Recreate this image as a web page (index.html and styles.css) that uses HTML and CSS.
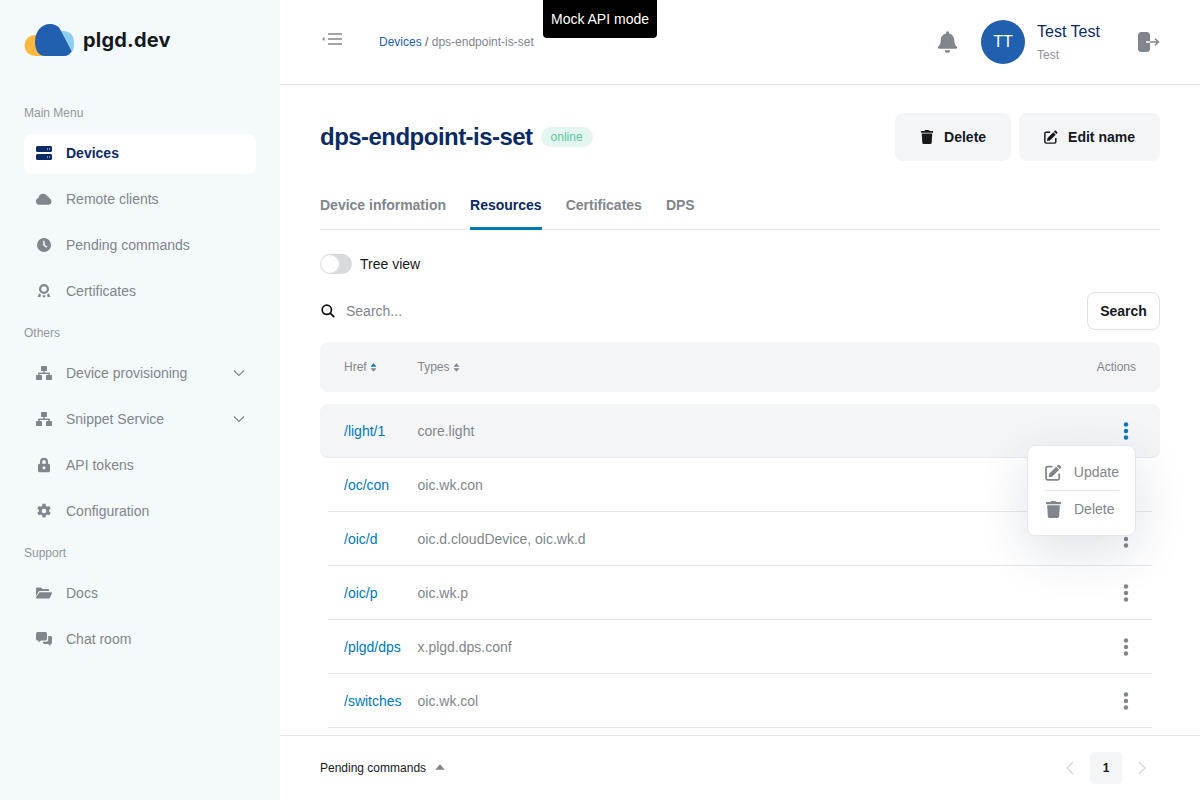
FILE: index.html
```html
<!DOCTYPE html>
<html lang="en">
<head>
  <meta charset="UTF-8">
  <meta name="viewport" content="width=device-width, initial-scale=1.0">
  <title>plgd.dev - dps-endpoint-is-set</title>
  <link rel="stylesheet" href="styles.css">
</head>
<body>
  <svg class="sprites" width="0" height="0">
    <symbol id="i-server" viewBox="0 0 16 16">
      <path fill-rule="evenodd" d="M1.500 1h13A1.500 1.500 0 0 1 16 2.500v3A1.500 1.500 0 0 1 14.500 7h-13A1.500 1.500 0 0 1 0 5.500v-3A1.500 1.500 0 0 1 1.500 1zM11 3.500v1h1v-1zm2 0v1h1v-1zM1.500 9h13A1.500 1.500 0 0 1 16 10.500v3a1.500 1.500 0 0 1-1.500 1.500h-13A1.500 1.500 0 0 1 0 13.500v-3A1.500 1.500 0 0 1 1.500 9zM11 11.500v1h1v-1zm2 0v1h1v-1z"/>
    </symbol>
    <symbol id="i-cloud" viewBox="0 0 16 16">
      <path d="M3.400 13.800A3.400 3.400 0 0 1 2.500 7.100 4.800 4.800 0 0 1 11.500 5.200a3 3 0 0 1 1.700 2 3.400 3.400 0 0 1-.6 6.600z"/>
    </symbol>
    <symbol id="i-clock" viewBox="0 0 16 16">
      <path fill-rule="evenodd" d="M8 1a7 7 0 1 1 0 14A7 7 0 0 1 8 1zM7.200 3.800v4.700l3.300 2.300.9-1.200-2.700-1.900V3.800z"/>
    </symbol>
    <symbol id="i-award" viewBox="0 0 16 16">
      <path fill-rule="evenodd" d="M8 1a5 5 0 1 1 0 10A5 5 0 0 1 8 1zm0 2.200a2.800 2.800 0 1 0 0 5.600 2.800 2.800 0 0 0 0-5.600zM3.300 10.300l1.700 1.500-.8 2.700-1.300-.8-1.400.3zm9.400 0l1.800 3.700-1.400-.3-1.300.8-.8-2.700zM6.800 12.300h2.400l.3 1.200-1.500 1.200-1.500-1.200z"/>
    </symbol>
    <symbol id="i-network" viewBox="0 0 16 16">
      <rect x="5" y="1" width="6" height="5" rx=".7"/>
      <rect x="7.300" y="5" width="1.400" height="3.500"/>
      <rect x="2.300" y="7.600" width="11.400" height="1.400"/>
      <rect x="2.300" y="8" width="1.400" height="3"/>
      <rect x="12.300" y="8" width="1.400" height="3"/>
      <rect x="0" y="10" width="6" height="5" rx=".7"/>
      <rect x="10" y="10" width="6" height="5" rx=".7"/>
    </symbol>
    <symbol id="i-lock" viewBox="0 0 16 16">
      <path fill-rule="evenodd" d="M8 .8a4 4 0 0 1 4 4v2h.5A1.500 1.500 0 0 1 14 8.300v5.400a1.500 1.500 0 0 1-1.500 1.500h-9A1.500 1.500 0 0 1 2 13.700V8.300a1.500 1.500 0 0 1 1.500-1.500H4v-2a4 4 0 0 1 4-4zm0 2.300a1.800 1.800 0 0 0-1.800 1.800v1.900h3.600V4.900A1.800 1.800 0 0 0 8 3.100zm0 6.200a1.500 1.500 0 1 0 0 3 1.500 1.500 0 0 0 0-3z"/>
    </symbol>
    <symbol id="i-cog" viewBox="0 0 16 16">
      <path fill-rule="evenodd" d="M6.500.8h3l.4 2.200 1.200.7 2.100-.8 1.500 2.600-1.700 1.400v1.400l1.700 1.400-1.500 2.600-2.100-.8-1.200.7-.4 2.200h-3l-.4-2.200-1.200-.7-2.100.8-1.500-2.600 1.700-1.400V6.900L1.300 5.500l1.500-2.600 2.100.8L6.100 3zM8 5.700a2.300 2.300 0 1 0 0 4.600 2.300 2.300 0 0 0 0-4.600z"/>
    </symbol>
    <symbol id="i-folder" viewBox="0 0 16 16">
      <path d="M0 3.500A1 1 0 0 1 1 2.500h4l1.500 1.500H12a1 1 0 0 1 1 1v1H4.200a2 2 0 0 0-1.800 1L0 11.200zM4.200 7.200H15a1 1 0 0 1 .9 1.400l-1.900 4a1.500 1.500 0 0 1-1.300.9H1a1 1 0 0 1-.8-1.500l2.800-4.100a1.500 1.500 0 0 1 1.200-.7z"/>
    </symbol>
    <symbol id="i-chat" viewBox="0 0 16 16">
      <path d="M1.500 1h8A1.500 1.500 0 0 1 11 2.500V8a1.500 1.500 0 0 1-1.500 1.500H5L2.500 11.500V9.500h-1A1.500 1.500 0 0 1 0 8V2.500A1.500 1.500 0 0 1 1.500 1zM12.200 5h2.300A1.500 1.500 0 0 1 16 6.500v5a1.500 1.500 0 0 1-1.500 1.500v2L12 13H8.500A1.500 1.500 0 0 1 7 11.500v-.8h3.200a2 2 0 0 0 2-2z"/>
    </symbol>
    <symbol id="i-trash" viewBox="0 0 448 512">
      <path d="M432 32H312l-9.400-18.700A24 24 0 0 0 281.100 0H166.800a23.720 23.720 0 0 0-21.400 13.300L136 32H16A16 16 0 0 0 0 48v32a16 16 0 0 0 16 16h416a16 16 0 0 0 16-16V48a16 16 0 0 0-16-16zM53.200 467a48 48 0 0 0 47.900 45h245.800a48 48 0 0 0 47.900-45L416 128H32z"/>
    </symbol>
    <symbol id="i-edit" viewBox="0 0 16 16">
      <path d="M12.300.9a1 1 0 0 1 1.400 0l1.400 1.400a1 1 0 0 1 0 1.400l-1 1-2.800-2.800zM10.600 2.600l2.800 2.800-6.600 6.600-3.300.5.500-3.300z"/>
      <path d="M7 2.500H2.500A1.500 1.500 0 0 0 1 4v9.500A1.500 1.500 0 0 0 2.500 15H12a1.500 1.500 0 0 0 1.500-1.500V9" fill="none" stroke="currentColor" stroke-width="1.700"/>
    </symbol>
    <symbol id="i-bell" viewBox="0 0 448 512">
      <path d="M224 512c35.320 0 63.970-28.650 63.970-64H160.030c0 35.350 28.650 64 63.970 64zm215.390-149.710c-19.320-20.760-55.470-51.990-55.470-154.290 0-77.700-54.480-139.900-127.940-155.160V32c0-17.670-14.320-32-31.980-32s-31.980 14.330-31.980 32v20.840C118.560 68.100 64.080 130.300 64.080 208c0 102.300-36.150 133.530-55.470 154.290-6 6.450-8.660 14.160-8.610 21.710.11 16.400 12.980 32 32.100 32h383.800c19.120 0 32-15.600 32.100-32 .05-7.550-2.610-15.270-8.610-21.710z"/>
    </symbol>
    <symbol id="i-dots" viewBox="0 0 6 20">
      <circle cx="3" cy="3.500" r="2.200"/>
      <circle cx="3" cy="10" r="2.200"/>
      <circle cx="3" cy="16.500" r="2.200"/>
    </symbol>
    <symbol id="i-sort-up" viewBox="0 0 8 5">
      <path d="M4 .3 7.700 4.700H.3z"/>
    </symbol>
  </svg>

  <div class="app">
    <aside class="sidebar">
      <div class="brand">
        <svg class="brand-logo" width="50" height="32" viewBox="0 0 50 32">
          <path d="M11 32A10.500 10.500 0 0 1 11 11h8V32z" fill="#ffb83f"/>
          <path d="M36 7h4A10 10 0 0 1 50 17v5a10 10 0 0 1-3 7z" fill="#8fcdf2"/>
          <path d="M21 32C14 32 11 25 11 18 11 8 17 0 26 0c5 0 9 2 11 7l10.500 20c-1 3-4 5-7.500 5z" fill="#2060ae"/>
        </svg>
        <span class="brand-name">plgd.dev</span>
      </div>

      <p class="menu-label menu-label-first">Main Menu</p>
      <a class="menu-item active"><svg class="menu-icon"><use href="#i-server"/></svg>Devices</a>
      <a class="menu-item"><svg class="menu-icon"><use href="#i-cloud"/></svg>Remote clients</a>
      <a class="menu-item"><svg class="menu-icon"><use href="#i-clock"/></svg>Pending commands</a>
      <a class="menu-item"><svg class="menu-icon"><use href="#i-award"/></svg>Certificates</a>

      <p class="menu-label">Others</p>
      <a class="menu-item"><svg class="menu-icon"><use href="#i-network"/></svg>Device provisioning
        <svg class="menu-arrow" viewBox="0 0 12 12"><path d="M1 3.500l5 5 5-5"/></svg></a>
      <a class="menu-item"><svg class="menu-icon"><use href="#i-network"/></svg>Snippet Service
        <svg class="menu-arrow" viewBox="0 0 12 12"><path d="M1 3.500l5 5 5-5"/></svg></a>
      <a class="menu-item"><svg class="menu-icon"><use href="#i-lock"/></svg>API tokens</a>
      <a class="menu-item"><svg class="menu-icon"><use href="#i-cog"/></svg>Configuration</a>

      <p class="menu-label">Support</p>
      <a class="menu-item"><svg class="menu-icon"><use href="#i-folder"/></svg>Docs</a>
      <a class="menu-item"><svg class="menu-icon"><use href="#i-chat"/></svg>Chat room</a>
    </aside>

    <div class="main">
      <div class="mock-badge">Mock API mode</div>

      <header class="topbar">
        <svg class="collapse-icon" width="20" height="12" viewBox="0 0 20 12">
          <path d="M0 6l2.500-2v4z" fill="#81868c"/>
          <path d="M6 1h14M6 6h14M6 11h14" stroke="#81868c" stroke-width="1.500" fill="none"/>
        </svg>
        <div class="breadcrumbs"><a>Devices</a> <span class="crumb-sep">/</span> dps-endpoint-is-set</div>
        <div class="topbar-right">
          <svg class="bell"><use href="#i-bell"/></svg>
          <div class="avatar">TT</div>
          <div class="user">
            <div class="user-name">Test Test</div>
            <div class="user-role">Test</div>
          </div>
          <svg class="logout" width="22" height="20" viewBox="0 0 22 20">
            <rect x="0" y="0" width="12" height="20" rx="3.500" fill="#81868c"/>
            <path d="M8 10h12M17 6.800 20.500 10 17 13.200" fill="none" stroke="#81868c" stroke-width="1.500"/>
            <path d="M8 10h4" stroke="#fff" stroke-width="1.500"/>
          </svg>
        </div>
      </header>

      <main class="content">
        <div class="page-head">
          <h1>dps-endpoint-is-set</h1>
          <span class="status">online</span>
          <div class="page-actions">
            <button class="btn"><svg class="btn-icon"><use href="#i-trash"/></svg>Delete</button>
            <button class="btn"><svg class="btn-icon"><use href="#i-edit"/></svg>Edit name</button>
          </div>
        </div>

        <nav class="tabs">
          <a class="tab">Device information</a>
          <a class="tab active">Resources</a>
          <a class="tab">Certificates</a>
          <a class="tab">DPS</a>
        </nav>

        <div class="tree-toggle">
          <span class="switch"></span>
          <span>Tree view</span>
        </div>

        <div class="search-row">
          <svg class="search-icon" width="14" height="14" viewBox="0 0 14 14">
            <circle cx="5.800" cy="5.800" r="4.600" fill="none" stroke="#111" stroke-width="1.700"/>
            <path d="M9.200 9.200l4 4" stroke="#111" stroke-width="1.900"/>
          </svg>
          <span class="search-input">Search...</span>
          <button class="search-btn">Search</button>
        </div>

        <div class="table">
          <div class="table-head">
            <span class="head-cell">Href <span class="sort"><svg class="sort-up active"><use href="#i-sort-up"/></svg><svg class="sort-down"><use href="#i-sort-up"/></svg></span></span>
            <span class="head-cell">Types <span class="sort"><svg class="sort-up"><use href="#i-sort-up"/></svg><svg class="sort-down"><use href="#i-sort-up"/></svg></span></span>
            <span>Actions</span>
          </div>

          <div class="table-row hover">
            <a class="href">/light/1</a><span>core.light</span>
            <svg class="dots"><use href="#i-dots"/></svg>
          </div>
          <div class="table-row">
            <a class="href">/oc/con</a><span>oic.wk.con</span>
            <svg class="dots"><use href="#i-dots"/></svg>
          </div>
          <div class="table-row">
            <a class="href">/oic/d</a><span>oic.d.cloudDevice, oic.wk.d</span>
            <svg class="dots"><use href="#i-dots"/></svg>
          </div>
          <div class="table-row">
            <a class="href">/oic/p</a><span>oic.wk.p</span>
            <svg class="dots"><use href="#i-dots"/></svg>
          </div>
          <div class="table-row">
            <a class="href">/plgd/dps</a><span>x.plgd.dps.conf</span>
            <svg class="dots"><use href="#i-dots"/></svg>
          </div>
          <div class="table-row">
            <a class="href">/switches</a><span>oic.wk.col</span>
            <svg class="dots"><use href="#i-dots"/></svg>
          </div>

          <div class="row-menu">
            <div class="row-menu-item"><svg class="row-menu-icon"><use href="#i-edit"/></svg>Update</div>
            <div class="row-menu-item"><svg class="row-menu-icon"><use href="#i-trash"/></svg>Delete</div>
          </div>
        </div>
      </main>

      <footer class="footer">
        <span class="pending">Pending commands</span>
        <svg class="pending-caret" width="10" height="6" viewBox="0 0 10 6"><path d="M5 .3 9.800 5.700H.2z" fill="#81868c"/></svg>
        <div class="pager">
          <svg class="pager-arrow" viewBox="0 0 10 14"><path d="M8 1 2 7l6 6"/></svg>
          <span class="page-num">1</span>
          <svg class="pager-arrow" viewBox="0 0 10 14"><path d="M2 1l6 6-6 6"/></svg>
        </div>
      </footer>
    </div>
  </div>
</body>
</html>
```

FILE: styles.css
```css
:root {
  --navy: #0b2a66;
  --blue: #0078be;
  --grey: #81868c;
  --light-bg: #f4f5f7;
  --line: #e6e8ee;
}

* {
  margin: 0;
  padding: 0;
  box-sizing: border-box;
}

html, body {
  height: 100%;
}

body {
  font-family: "Liberation Sans", Arial, sans-serif;
  font-size: 14px;
  color: var(--grey);
  background: #fff;
  overflow: hidden;
}

.sprites {
  display: none;
}

svg {
  fill: currentColor;
}

.app {
  display: flex;
  height: 800px;
}

/* sidebar */

.sidebar {
  width: 280px;
  flex: none;
  background: #f4f9fc;
  padding: 24px 24px 0;
}

.brand {
  display: flex;
  align-items: center;
  gap: 9px;
  height: 32px;
}

.brand-name {
  font-family: Inter, "Liberation Sans", sans-serif;
  font-size: 20px;
  font-weight: 700;
  color: #16191c;
  letter-spacing: 0.2px;
}

.menu-label {
  font-size: 12px;
  line-height: 14px;
  color: #93979c;
  margin: 14px 0;
  height: 14px;
}

.menu-label-first {
  margin-top: 50px;
}

.menu-item {
  display: flex;
  align-items: center;
  height: 40px;
  margin-bottom: 6px;
  padding: 0 12px 2px;
  border-radius: 8px;
  color: var(--grey);
}

.menu-item.active {
  background: #fff;
  color: var(--navy);
  font-weight: 700;
}

.menu-icon {
  width: 16px;
  height: 16px;
  margin-right: 14px;
  flex: none;
}

.menu-arrow {
  width: 12px;
  height: 12px;
  margin-left: auto;
  margin-right: -1px;
  fill: none;
  stroke: var(--grey);
  stroke-width: 1.200;
}

/* top bar */

.main {
  flex: 1;
  min-width: 0;
  display: flex;
  flex-direction: column;
  position: relative;
}

.mock-badge {
  position: absolute;
  top: 0;
  left: 263px;
  width: 114px;
  height: 38px;
  background: #000;
  color: #fff;
  border-radius: 0 0 4px 4px;
  display: flex;
  align-items: center;
  justify-content: center;
  z-index: 5;
}

.topbar {
  height: 85px;
  flex: none;
  display: flex;
  align-items: center;
  padding: 0 40px;
  border-bottom: 1px solid var(--line);
}

.collapse-icon {
  margin: 0 37px 6px 2px;
  flex: none;
}

.breadcrumbs {
  font-size: 12px;
  color: var(--grey);
}

.breadcrumbs a {
  color: #2060ae;
}

.crumb-sep {
  color: #555;
}

.topbar-right {
  margin-left: auto;
  display: flex;
  align-items: center;
}

.bell {
  width: 19px;
  height: 22px;
  margin-right: 24px;
  color: var(--grey);
}

.avatar {
  width: 44px;
  height: 44px;
  border-radius: 50%;
  background: #2060ae;
  color: #fff;
  font-size: 16px;
  display: flex;
  align-items: center;
  justify-content: center;
  margin-right: 12px;
}

.user {
  width: 101px;
  padding-top: 1px;
}

.user-name {
  font-size: 16px;
  line-height: 18px;
  color: var(--navy);
  margin-bottom: 7px;
}

.user-role {
  font-size: 12px;
  line-height: 14px;
  color: #93979c;
}

.logout {
  flex: none;
}

/* page content */

.content {
  flex: 1;
  min-height: 0;
  overflow: hidden;
  padding: 28px 40px 0;
}

.page-head {
  display: flex;
  align-items: center;
  height: 48px;
}

h1 {
  font-size: 24px;
  font-weight: 700;
  letter-spacing: -0.53px;
  color: var(--navy);
}

.status {
  margin-left: 8px;
  height: 20px;
  padding: 0 10px;
  border-radius: 10px;
  background: #e5f6f0;
  color: #56c99f;
  font-size: 12px;
  line-height: 20px;
}

.page-actions {
  margin-left: auto;
  display: flex;
  gap: 8px;
}

.btn {
  display: flex;
  align-items: center;
  height: 48px;
  padding: 0 25px;
  border: none;
  border-radius: 8px;
  background: var(--light-bg);
  color: #16191c;
  font-family: inherit;
  font-size: 14px;
  font-weight: 700;
}

.btn-icon {
  width: 14px;
  height: 14px;
  margin-right: 10px;
}

.tabs {
  display: flex;
  gap: 24px;
  margin-top: 20px;
  height: 49px;
  border-bottom: 1px solid var(--line);
}

.tab {
  height: 49px;
  line-height: 48px;
  font-weight: 700;
  color: var(--grey);
}

.tab.active {
  color: var(--navy);
  border-bottom: 3px solid var(--blue);
}

.tree-toggle {
  display: flex;
  align-items: center;
  gap: 8px;
  height: 20px;
  margin-top: 24px;
  color: #16191c;
}

.switch {
  position: relative;
  width: 32px;
  height: 20px;
  border-radius: 10px;
  background: #d9dadd;
}

.switch::after {
  content: "";
  position: absolute;
  left: 1px;
  top: 1px;
  width: 18px;
  height: 18px;
  border-radius: 50%;
  background: #fff;
}

.search-row {
  display: flex;
  align-items: center;
  height: 38px;
  margin-top: 18px;
}

.search-icon {
  margin-left: 1px;
  flex: none;
}

.search-input {
  margin-left: 11px;
  color: var(--grey);
}

.search-btn {
  margin-left: auto;
  width: 73px;
  height: 38px;
  background: #fff;
  border: 1px solid #dfe1e6;
  border-radius: 8px;
  color: #16191c;
  font-family: inherit;
  font-size: 14px;
  font-weight: 700;
}

/* resources table */

.table {
  position: relative;
  margin-top: 12px;
}

.table-head {
  display: grid;
  grid-template-columns: 73.5px 1fr auto;
  align-items: center;
  height: 50px;
  padding: 0 24px;
  margin-bottom: 12px;
  border-radius: 8px;
  background: var(--light-bg);
  font-size: 12px;
}

.head-cell {
  display: flex;
  align-items: center;
  gap: 3px;
}

.sort {
  display: flex;
  flex-direction: column;
  gap: 1px;
}

.sort svg {
  display: block;
  width: 7px;
  height: 4px;
  color: var(--grey);
}

.sort-up.active {
  color: var(--blue);
}

.sort-down {
  transform: rotate(180deg);
}

.table-row {
  display: grid;
  grid-template-columns: 73.5px 1fr auto;
  align-items: center;
  height: 54px;
  margin: 0 8px;
  padding: 0 16px;
  border-bottom: 1px solid var(--line);
}

.table-row.hover {
  margin: 0;
  padding: 0 24px;
  background: var(--light-bg);
  border-radius: 8px;
}

.href {
  color: var(--blue);
}

.dots {
  width: 6px;
  height: 20px;
  margin-right: 7px;
  color: var(--grey);
}

.hover .dots {
  color: var(--blue);
}

.row-menu {
  position: absolute;
  top: 103px;
  right: 24px;
  width: 109px;
  height: 91px;
  padding: 8px 16px 0 17px;
  background: #fff;
  border: 1px solid var(--line);
  border-radius: 8px;
  box-shadow: 0 16px 50px rgba(28, 52, 99, 0.14);
  z-index: 3;
}

.row-menu-item {
  display: flex;
  align-items: center;
  height: 36px;
  color: var(--grey);
}

.row-menu-item:first-child {
  height: 37px;
  border-bottom: 1px solid var(--line);
}

.row-menu-icon {
  width: 17px;
  height: 17px;
  margin-right: 12px;
}

/* footer */

.footer {
  height: 65px;
  flex: none;
  display: flex;
  align-items: center;
  padding: 0 40px;
  border-top: 1px solid #e8e8e8;
}

.pending {
  font-size: 12px;
  color: #16191c;
}

.pending-caret {
  margin-left: 9px;
  margin-bottom: 2px;
}

.pager {
  margin-left: auto;
  display: flex;
  align-items: center;
}

.pager-arrow {
  width: 10px;
  height: 14px;
  margin: 0 15px;
  fill: none;
  stroke: #d3d5d8;
  stroke-width: 1.400;
}

.pager .pager-arrow:last-child {
  margin-right: 13px;
}

.page-num {
  width: 32px;
  height: 32px;
  border-radius: 4px;
  background: var(--light-bg);
  color: #16191c;
  font-size: 12px;
  font-weight: 700;
  line-height: 32px;
  text-align: center;
}
```
